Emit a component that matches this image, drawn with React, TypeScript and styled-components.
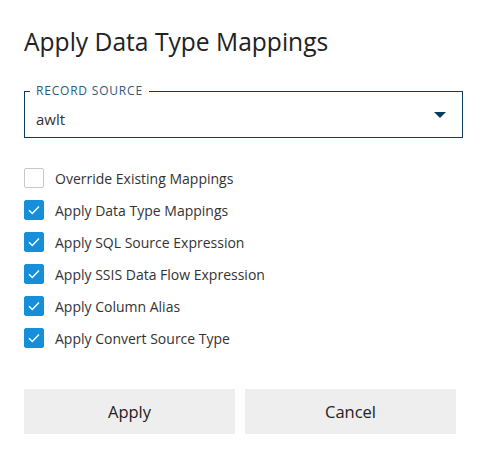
import styled, { createGlobalStyle } from 'styled-components';

const GlobalStyle = createGlobalStyle`
  html, body {
    margin: 0;
    padding: 0;
    background: #fff;
  }
  body {
    font-family: "Open Sans", "Noto Sans", sans-serif;
    color: #333;
  }
`;

const Dialog = styled.div`
  width: 488px;
  box-sizing: border-box;
  padding: 26px 25px 0 24px;
`;

const Title = styled.h1`
  margin: 0;
  font-size: 24.6px;
  font-weight: 400;
  line-height: 32px;
  color: #222;
`;

const SelectBox = styled.div`
  position: relative;
  margin-top: 33px;
  height: 47px;
  box-sizing: border-box;
  border: 1px solid #0c3c60;
  display: flex;
  align-items: center;
  justify-content: space-between;
  padding: 8px 16px 0 11px;
`;

const FloatLabel = styled.span`
  position: absolute;
  top: -8px;
  left: 5px;
  padding: 0 6px;
  background: #fff;
  font-size: 12px;
  line-height: 14px;
  letter-spacing: 0.8px;
  color: #2b5b80;
`;

const SelectValue = styled.span`
  font-size: 15px;
  color: #333;
`;

const Caret = styled.span`
  width: 0;
  height: 0;
  border-left: 6.5px solid transparent;
  border-right: 6.5px solid transparent;
  border-top: 6px solid #0c3c60;
  margin-top: -8px;
`;

const Options = styled.ul`
  list-style: none;
  margin: 30px 0 0;
  padding: 0;
  display: flex;
  flex-direction: column;
  gap: 12px;
`;

const Option = styled.li`
  display: flex;
  align-items: center;
  gap: 11px;
  height: 20px;
  font-size: 14px;
  color: #333;
`;

const Box = styled.span<{ $checked: boolean }>`
  width: 20px;
  height: 20px;
  box-sizing: border-box;
  border-radius: 2px;
  display: flex;
  align-items: center;
  justify-content: center;
  border: 1px solid ${(p) => (p.$checked ? '#168fdb' : '#c8c8c8')};
  background: ${(p) => (p.$checked ? '#168fdb' : '#fff')};
`;

const Actions = styled.div`
  display: grid;
  grid-template-columns: 211px 211px;
  gap: 10px;
  margin-top: 41px;
`;

const Button = styled.button`
  height: 45px;
  border: none;
  background: #eeeeee;
  font-family: "Open Sans", "Noto Sans", sans-serif;
  font-size: 16.5px;
  color: #222;
  padding: 0;
  cursor: pointer;
`;

const options = [
  { label: 'Override Existing Mappings', checked: false },
  { label: 'Apply Data Type Mappings', checked: true },
  { label: 'Apply SQL Source Expression', checked: true },
  { label: 'Apply SSIS Data Flow Expression', checked: true },
  { label: 'Apply Column Alias', checked: true },
  { label: 'Apply Convert Source Type', checked: true },
];

const Check = () => (
  <svg width="14" height="14" viewBox="0 0 14 14">
    <path d="M2 7.3 L5.3 10.5 L12 3.6" fill="none" stroke="#fff" strokeWidth="1.5" />
  </svg>
);

const App = () => {
  return (
    <>
      <GlobalStyle />
      <Dialog>
        <Title>Apply Data Type Mappings</Title>
        <SelectBox>
          <FloatLabel>RECORD SOURCE</FloatLabel>
          <SelectValue>awlt</SelectValue>
          <Caret />
        </SelectBox>
        <Options>
          {options.map((o) => (
            <Option key={o.label}>
              <Box $checked={o.checked}>{o.checked && <Check />}</Box>
              {o.label}
            </Option>
          ))}
        </Options>
        <Actions>
          <Button type="button">Apply</Button>
          <Button type="button">Cancel</Button>
        </Actions>
      </Dialog>
    </>
  );
};

export default App;
